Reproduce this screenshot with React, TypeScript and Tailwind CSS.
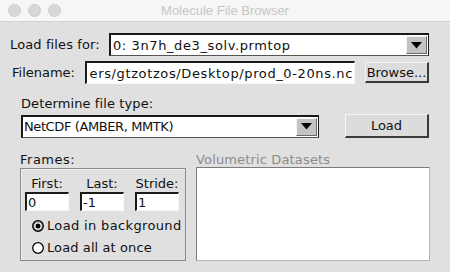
import React from "react";

const font = { fontFamily: '"DejaVu Sans", Verdana, sans-serif' };

function Arrow() {
  return (
    <div className="w-[21px] h-full flex items-center justify-center bg-[#c3c3c3] border-t border-l border-t-[#f4f4f4] border-l-[#f4f4f4] border-b border-r border-b-[#6a6a6a] border-r-[#6a6a6a]">
      <svg width="11" height="7" viewBox="0 0 11 7">
        <polygon points="0,0 11,0 5.5,6.5" fill="#000" />
      </svg>
    </div>
  );
}

function Radio({ checked }: { checked: boolean }) {
  return (
    <svg width="12" height="12" viewBox="0 0 12 12" className="shrink-0">
      <circle cx="6" cy="6" r="5.3" fill={checked ? "#9a9a9a" : "#fff"} stroke="#000" strokeWidth="1.3" />
      {checked && <circle cx="6" cy="6" r="3.6" fill="#fff" />}
      {checked && <circle cx="6" cy="6" r="2.5" fill="#000" />}
    </svg>
  );
}

function Entry({ value, w }: { value: string; w: string }) {
  return (
    <div className={`${w} h-[19px] bg-white border-t-2 border-l-2 border-t-[#1a1a1a] border-l-[#1a1a1a] border-b border-r border-b-[#f8f8f8] border-r-[#f8f8f8] flex items-center pl-[1px] text-[13px] leading-none`}>
      {value}
    </div>
  );
}

export default function App() {
  return (
    <div className="w-[450px] h-[272px] bg-[#e0e0e0] flex flex-col overflow-hidden text-[#111]" style={font}>
      {/* Title bar */}
      <div className="h-[22px] bg-[#f6f6f6] border-b border-[#d2d2d2] flex items-center shrink-0">
        <div className="flex items-center gap-[7px] pl-[8px]">
          <div className="w-[13px] h-[13px] rounded-full bg-[#d8d8d8] border border-[#cdcdcd]" />
          <div className="w-[13px] h-[13px] rounded-full bg-[#d8d8d8] border border-[#cdcdcd]" />
          <div className="w-[13px] h-[13px] rounded-full bg-[#d8d8d8] border border-[#cdcdcd]" />
        </div>
        <div className="flex-1 text-center text-[13px] text-[#c6c6c6] pr-[61px]" style={{ fontFamily: '"Liberation Sans", Arial, sans-serif' }}>
          Molecule File Browser
        </div>
      </div>

      {/* Row 1 */}
      <div className="flex items-center mt-[11px] pl-[10px]">
        <div className="w-[99px] text-[13px] leading-none tracking-[0.12px]">Load files for:</div>
        <div className="w-[320px] h-[23px] bg-white border-t-2 border-l-2 border-t-[#1a1a1a] border-l-[#1a1a1a] border-b border-r border-b-[#555] border-r-[#1a1a1a] flex items-center">
          <div className="flex-1 pl-[2px] text-[13px] leading-none tracking-[0.6px]">0: 3n7h_de3_solv.prmtop</div>
          <div className="h-full py-[1px] pr-[1px]">
            <Arrow />
          </div>
        </div>
      </div>

      {/* Row 2 */}
      <div className="flex items-center mt-[5px] pl-[12px]">
        <div className="w-[73px] text-[13px] leading-none">Filename:</div>
        <div className="w-[270px] h-[23px] bg-white border-t-2 border-l-2 border-t-[#1a1a1a] border-l-[#1a1a1a] border-b border-r border-b-[#f8f8f8] border-r-[#f8f8f8] flex items-center justify-end overflow-hidden whitespace-nowrap pr-[1px] text-[13px] leading-none tracking-[0.62px]">
          ers/gtzotzos/Desktop/prod_0-20ns.nc
        </div>
        <div className="ml-[10px] w-[64px] h-[21px] bg-[#dcdcdc] border-t border-l border-t-[#f6f6f6] border-l-[#f6f6f6] border-b-2 border-r-2 border-b-[#3a3a3a] border-r-[#3a3a3a] flex items-center justify-center text-[13px] leading-none">
          Browse...
        </div>
      </div>

      {/* Row 3 */}
      <div className="pl-[21px] mt-[13px] text-[13px] leading-none tracking-[0.1px]">Determine file type:</div>
      <div className="flex items-center mt-[4px] pl-[21px]">
        <div className="w-[298px] h-[23px] bg-white border-t-2 border-l-2 border-t-[#1a1a1a] border-l-[#1a1a1a] border-b border-r border-b-[#555] border-r-[#1a1a1a] flex items-center">
          <div className="flex-1 pl-[1px] text-[13px] leading-none tracking-[-0.4px]">NetCDF (AMBER, MMTK)</div>
          <div className="h-full py-[1px] pr-[1px]">
            <Arrow />
          </div>
        </div>
        <div className="ml-[26px] w-[84px] h-[24px] bg-[#dcdcdc] border-t border-l border-t-[#f6f6f6] border-l-[#f6f6f6] border-b-2 border-r-2 border-b-[#3a3a3a] border-r-[#3a3a3a] flex items-center justify-center text-[13px] leading-none">
          Load
        </div>
      </div>

      {/* Row 4 */}
      <div className="flex mt-[15px] pl-[20px]">
        <div className="w-[166px] flex flex-col">
          <div className="text-[13px] leading-none h-[14px] tracking-[0.5px]">Frames:</div>
          <div className="mt-[1px] h-[93px] border border-[#8a8a8a] shadow-[inset_1px_1px_0_#f2f2f2] flex flex-col px-[4px] pt-[8px]">
            <div className="flex gap-[11px] text-[13px] leading-none">
              <div className="w-[44px] flex flex-col items-center">
                <div>First:</div>
              </div>
              <div className="w-[44px] flex flex-col items-center">
                <div>Last:</div>
              </div>
              <div className="w-[44px] flex flex-col items-center">
                <div>Stride:</div>
              </div>
            </div>
            <div className="flex gap-[11px] mt-[2px]">
              <Entry value="0" w="w-[44px]" />
              <Entry value="-1" w="w-[44px]" />
              <Entry value="1" w="w-[44px]" />
            </div>
            <div className="flex items-center gap-[3px] mt-[8px] pl-[7px] text-[13px] leading-none whitespace-nowrap tracking-[0.35px]">
              <Radio checked />
              <span>Load in background</span>
            </div>
            <div className="flex items-center gap-[3px] mt-[9px] pl-[7px] text-[13px] leading-none whitespace-nowrap tracking-[0.1px]">
              <Radio checked={false} />
              <span>Load all at once</span>
            </div>
          </div>
        </div>
        <div className="ml-[10px] w-[234px] flex flex-col">
          <div className="text-[13px] leading-none h-[14px] text-[#8c8c8c] tracking-[0.15px]">Volumetric Datasets</div>
          <div className="h-[94px] bg-white border-t border-l border-t-[#7a7a7a] border-l-[#7a7a7a] border-b border-r border-b-[#b4b4b4] border-r-[#b4b4b4]" />
        </div>
      </div>
    </div>
  );
}
